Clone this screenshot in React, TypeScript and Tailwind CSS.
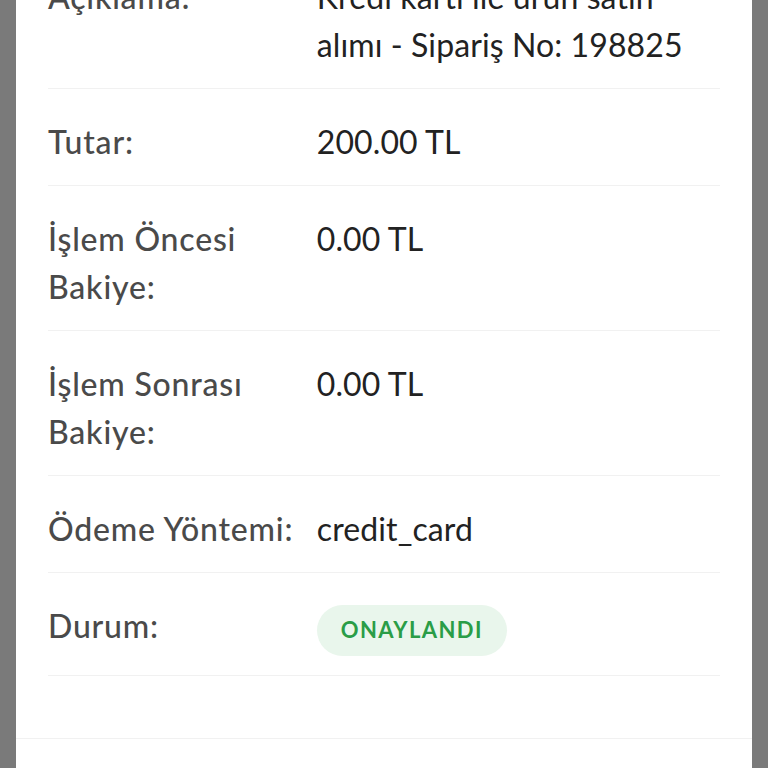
import React from "react";

type Row = {
  label: string;
  value?: string;
  badge?: string;
};

const ROWS: Row[] = [
  { label: "Açıklama:", value: "Kredi kartı ile ürün satın alımı - Sipariş No: 198825" },
  { label: "Tutar:", value: "200.00 TL" },
  { label: "İşlem Öncesi Bakiye:", value: "0.00 TL" },
  { label: "İşlem Sonrası Bakiye:", value: "0.00 TL" },
  { label: "Ödeme Yöntemi:", value: "credit_card" },
  { label: "Durum:", badge: "ONAYLANDI" },
];

function DetailRow({ row }: { row: Row }) {
  return (
    <div className="flex items-start border-b border-[#f1f1f1] pt-[29px] pb-[19px]">
      <div className="w-[40%] shrink-0 pr-4 text-[32px] leading-[48px] font-medium tracking-[0.8px] text-[#4a4a4a]">
        {row.label}
      </div>
      <div className="flex-1 text-[32px] leading-[48px] tracking-[0.1px] text-[#222222]">
        {row.badge ? (
          <span className="mt-[2px] inline-flex h-[51px] items-center rounded-full bg-[#e9f6ec] px-6 text-[22px] font-bold tracking-[1.4px] text-[#2a9d47]">
            {row.badge}
          </span>
        ) : (
          row.value
        )}
      </div>
    </div>
  );
}

export default function App() {
  return (
    <div
      className="h-[768px] overflow-hidden bg-[#7a7a7a] px-4"
      style={{ fontFamily: "Lato, 'Noto Sans', sans-serif" }}
    >
      <div className="-mt-[56px] bg-white">
        <div className="px-8 pb-[62px]">
          {ROWS.map((row) => (
            <DetailRow key={row.label} row={row} />
          ))}
        </div>
        <div className="h-[200px] border-t border-[#f1f1f1]" />
      </div>
    </div>
  );
}
